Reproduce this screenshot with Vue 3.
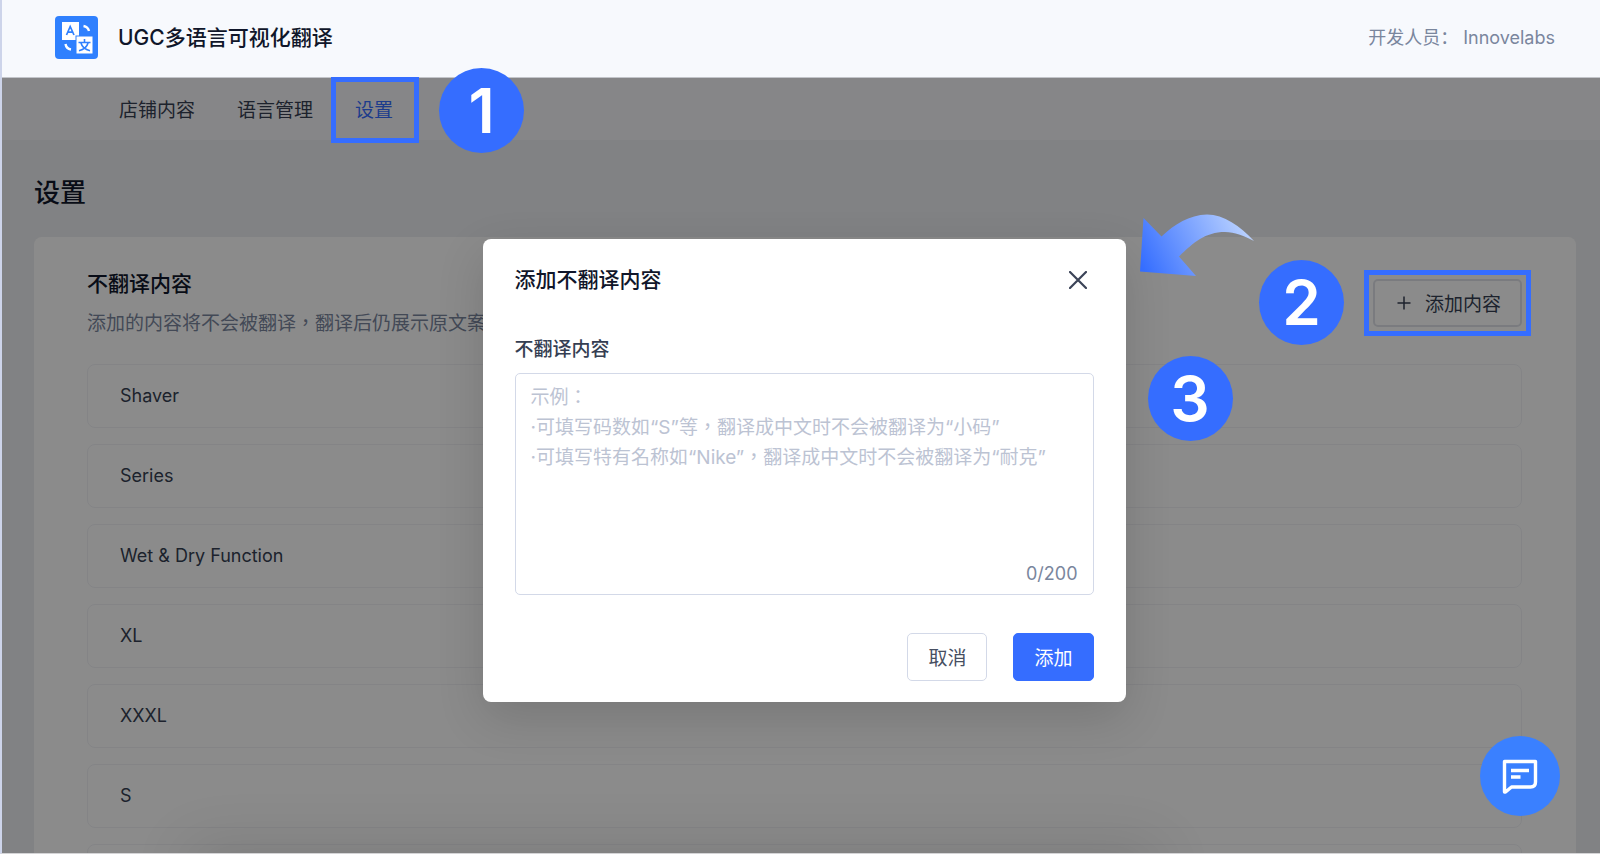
<template>
    <div class="app">
        <header class="topbar">
            <svg class="logo" viewBox="0 0 43 43" aria-hidden="true">
                <rect width="43" height="43" rx="4" fill="#2f80fe" />
                <rect x="7" y="6" width="17" height="18" fill="#fff" />
                <rect x="21" y="20" width="17" height="18" fill="#fff" stroke="#2f80fe" stroke-width="1" />
                <path d="M11.5 19 L15.2 10.5 L19 19 M12.8 16.2 H17.7" fill="none" stroke="#2f80fe" stroke-width="1.7" />
                <path d="M29.5 23 V26 M23.5 26.5 H35.5 M26 27 C27 31 30 33.5 35 34.8 M33 27 C32 31 29 33.5 24 34.8" fill="none" stroke="#2f80fe" stroke-width="1.6" />
                <path d="M28.5 10 C31.5 10.5 33.3 12.2 34 15 M10.5 28 C11 31 13 33 16 33.5" fill="none" stroke="#fff" stroke-width="2.4" />
            </svg>
            <h1>UGC多语言可视化翻译</h1>
            <p class="developer">开发人员： Innovelabs</p>
        </header>

        <main class="page">
            <nav class="nav">
                <div v-for="tab in tabs" :key="tab" class="tab">
                    <a href="#" :class="{ active: tab === currentTab }" @click.prevent="currentTab = tab">{{ tab }}</a>
                    <template v-if="tab === '设置'">
                        <span class="frame"></span>
                        <span class="step step-one">1</span>
                    </template>
                </div>
            </nav>

            <h2 class="page-title">设置</h2>

            <section class="card">
                <div class="card-head">
                    <div>
                        <h3>不翻译内容</h3>
                        <p class="description">添加的内容将不会被翻译，翻译后仍展示原文案</p>
                    </div>
                    <div class="action">
                        <button type="button" class="btn btn-open" @click="opened = true">
                            <svg width="14" height="14" viewBox="0 0 14 14" aria-hidden="true">
                                <path d="M7 0.5 V13.5 M0.5 7 H13.5" stroke="currentColor" stroke-width="1.5" />
                            </svg>
                            <span>添加内容</span>
                        </button>
                        <span class="frame"></span>
                        <span class="step step-two">2</span>
                    </div>
                </div>
                <ul class="list">
                    <li v-for="word in words" :key="word">{{ word }}</li>
                </ul>
            </section>

            <div v-if="opened" class="overlay">
                <form class="modal" @submit.prevent="addWord">
                    <div class="modal-head">
                        <h3>添加不翻译内容</h3>
                        <button type="button" class="close" aria-label="关闭" @click="opened = false">
                            <svg width="18" height="18" viewBox="0 0 18 18" aria-hidden="true">
                                <path d="M1 1 L17 17 M17 1 L1 17" stroke="currentColor" stroke-width="2.2" stroke-linecap="round" />
                            </svg>
                        </button>
                    </div>
                    <label for="content">不翻译内容</label>
                    <div class="field">
                        <textarea id="content" v-model="content" maxlength="200" :placeholder="placeholder"></textarea>
                        <span class="count">{{ content.length }}/200</span>
                    </div>
                    <div class="modal-foot">
                        <button type="button" class="btn" @click="opened = false">取消</button>
                        <button type="submit" class="btn btn-primary">添加</button>
                    </div>
                    <svg class="arrow" width="116" height="64" viewBox="0 0 116 64" aria-hidden="true">
                        <defs>
                            <linearGradient id="arrow-fill" gradientUnits="userSpaceOnUse" x1="4" y1="56" x2="104" y2="8">
                                <stop offset="0" stop-color="#346dff" />
                                <stop offset="1" stop-color="#b9d1ff" />
                            </linearGradient>
                        </defs>
                        <path d="M1 57.5 L4.5 4 L22.5 22.5 C36 10 50 1 68 0.5 C85 0.5 101 12 115 27 C104 21 96 18.5 86 18 C66 18 54 29 40 42.5 L57 62 Z" fill="url(#arrow-fill)" />
                    </svg>
                    <span class="step step-three">3</span>
                </form>
            </div>
        </main>

        <button type="button" class="chat" aria-label="客服">
            <svg width="36" height="36" viewBox="0 0 36 36" aria-hidden="true">
                <path d="M2.5 3.5 H33.5 V24 Q33.5 29 28.5 29 H9.5 L3.5 34 H2.5 Z" fill="none" stroke="#fff" stroke-width="3.4" stroke-linejoin="round" />
                <path d="M9 12.5 H27 M9 19 H18.5" stroke="#fff" stroke-width="3.4" />
            </svg>
        </button>
    </div>
</template>

<script setup>
import { ref } from 'vue';

const tabs = ['店铺内容', '语言管理', '设置'];
const currentTab = ref('设置');
const words = ref(['Shaver', 'Series', 'Wet & Dry Function', 'XL', 'XXXL', 'S', '']);
const opened = ref(true);
const content = ref('');

const placeholder = [
    '示例：',
    '·可填写码数如“S”等，翻译成中文时不会被翻译为“小码”',
    '·可填写特有名称如“Nike”，翻译成中文时不会被翻译为“耐克”',
].join('\n');

const addWord = () => {
    if (!content.value) return;
    words.value.unshift(content.value);
    content.value = '';
    opened.value = false;
};
</script>

<style>
body{
    background-color: #ecedf0;
}
</style>

<style scoped>
.app{
    position: relative;
    box-sizing: border-box;
    display: flex;
    flex-direction: column;
    height: 100vh;
    overflow: hidden;
    border-left: 2px solid #cdd4ea;
    border-bottom: 1px solid #d4d4d6;
    font-family: Inter, "Noto Sans CJK SC", sans-serif;
    font-size: 18px;
    color: #353e52;
}

h1, h2, h3, p, ul{
    margin: 0;
    padding: 0;
}

h1, h3{
    font-size: 21px;
    line-height: 30px;
    font-weight: 500;
    color: #10162a;
}

.topbar{
    display: flex;
    flex-shrink: 0;
    align-items: center;
    gap: 20px;
    height: 75px;
    padding: 0 45px 2px 53px;
    border-bottom: 1px solid #c3c5ca;
    background-color: #f7f9fd;
}

.logo{
    width: 43px;
    height: 43px;
}

.developer{
    margin-left: auto;
    line-height: 24px;
    color: #7a869d;
}

.page{
    position: relative;
    flex: 1;
    min-height: 0;
    background-color: #ecedf0;
}

.nav{
    display: flex;
    gap: 42px;
    height: 62px;
    padding-left: 117px;
    background-color: #f5f5f7;
}

.tab{
    position: relative;
    display: flex;
    align-items: center;
    padding-top: 4px;

    a{
        font-size: 19px;
        line-height: 30px;
        color: #353e52;
        text-decoration: none;
    }

    a.active{
        color: #356dff;
    }
}

.frame{
    position: absolute;
    z-index: 30;
    box-sizing: border-box;
    border: 5px solid #356dff;
    pointer-events: none;
}

.tab .frame{
    inset: -1px -26px -3px -24px;
}

.step{
    position: absolute;
    z-index: 30;
    width: 85px;
    height: 85px;
    border-radius: 50%;
    background-color: #356dff;
    color: #fff;
    font-size: 62px;
    font-weight: 600;
    line-height: 85px;
    text-align: center;
}

.step-one{
    left: 84px;
    top: -10px;
}

.page-title{
    padding: 33px 32px 24px;
    font-size: 26px;
    line-height: 40px;
    font-weight: 500;
    color: #10162a;
}

.card{
    margin: 0 24px 0 32px;
    padding: 32px 54px 0 53px;
    border-radius: 8px;
    background-color: #fefefe;
}

.card-head{
    display: flex;
    justify-content: space-between;
    margin-bottom: 25px;
}

.description{
    margin-top: 10px;
    font-family: Inter, "Noto Sans CJK TC", sans-serif;
    font-size: 19px;
    line-height: 30px;
    color: #7a869d;
}

.action{
    position: relative;
    align-self: flex-start;
    margin-top: 10px;
}

.action .frame{
    inset: -9px;
}

.step-two{
    right: 178px;
    top: -19px;
}

.btn{
    height: 48px;
    padding: 0 20px;
    border: 1px solid #d3d9e8;
    border-radius: 5px;
    background-color: #fff;
    color: #474f62;
    font-family: "Noto Sans CJK SC", sans-serif;
    font-size: 19px;
    line-height: 28px;
    cursor: pointer;
}

.btn-open{
    display: flex;
    align-items: center;
    gap: 14px;
    padding: 0 19px 0 22px;
    border: 2px solid #dfe1e8;
    background-color: transparent;
    color: #353e52;
}

.btn-primary{
    border-color: #356dff;
    background-color: #356dff;
    color: #fff;
}

.list{
    display: flex;
    flex-direction: column;
    gap: 16px;
    list-style: none;

    li{
        box-sizing: border-box;
        height: 64px;
        padding: 0 32px;
        border: 1px solid #f0f1f5;
        border-radius: 8px;
        line-height: 62px;
    }
}

.overlay{
    position: absolute;
    inset: 0;
    z-index: 20;
    display: flex;
    align-items: flex-start;
    justify-content: center;
    padding: 161px 0 0 6px;
    background-color: rgba(0, 0, 0, 0.45);
}

/* soft shade rising from the bottom edge */
.overlay::after{
    content: "";
    position: absolute;
    top: 100%;
    left: 12%;
    right: 28%;
    height: 40px;
    box-shadow: 0 0 60px 6px rgba(0, 0, 0, 0.12);
}

.modal{
    position: relative;
    box-sizing: border-box;
    width: 643px;
    padding: 26px 32px 21px;
    border-radius: 8px;
    background-color: #fff;
    box-shadow: 0 16px 48px rgba(0, 0, 0, 0.14);
}

.modal-head{
    display: flex;
    align-items: center;
    justify-content: space-between;
    margin-bottom: 40px;
}

.close{
    display: flex;
    margin-right: 7px;
    padding: 0;
    border: 0;
    background: none;
    color: #3b4357;
    cursor: pointer;
}

label{
    display: block;
    margin-bottom: 8px;
    font-size: 19px;
    line-height: 30px;
    font-weight: 500;
}

.field{
    position: relative;
    display: flex;
}

textarea{
    box-sizing: border-box;
    width: 100%;
    height: 222px;
    padding: 9px 15px;
    border: 1px solid #d3d9e8;
    border-radius: 5px;
    outline: none;
    resize: none;
    font-family: Inter, "Noto Sans CJK TC", sans-serif;
    font-size: 19px;
    line-height: 30px;
    color: #353e52;
}

textarea::placeholder{
    color: #bcc3d3;
}

.count{
    position: absolute;
    right: 16px;
    bottom: 11px;
    color: #7a869d;
}

.modal-foot{
    display: flex;
    justify-content: flex-end;
    gap: 26px;
    margin-top: 38px;
}

.arrow{
    position: absolute;
    left: 656px;
    top: -25px;
}

.step-three{
    left: 665px;
    top: 117px;
}

.chat{
    position: absolute;
    right: 40px;
    bottom: 37px;
    z-index: 30;
    display: flex;
    align-items: center;
    justify-content: center;
    width: 80px;
    height: 80px;
    padding: 0;
    border: 0;
    border-radius: 50%;
    background-color: #3a80ff;
    cursor: pointer;
}
</style>
